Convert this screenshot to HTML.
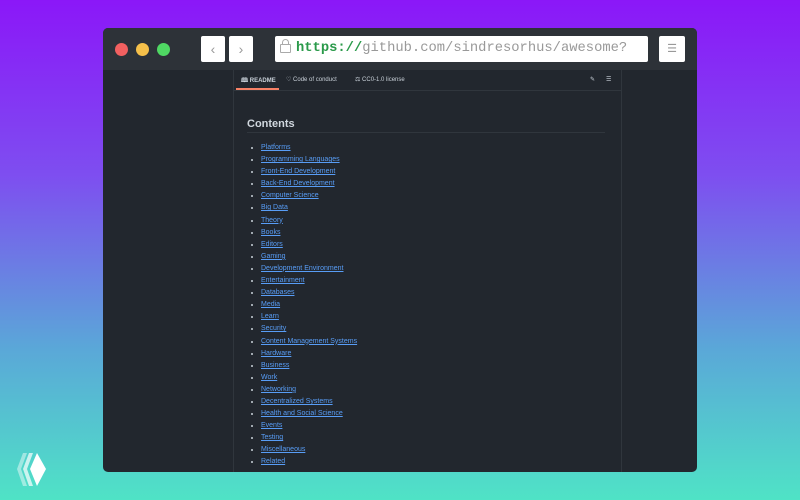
<!DOCTYPE html>
<html><head><style>
body{margin:0;width:800px;height:500px;overflow:hidden;background:linear-gradient(180deg,#8b17f8 0%,#7e4ef0 35%,#5aa8d8 70%,#4fe3c6 100%);font-family:"Liberation Sans",sans-serif;position:relative}
.win{position:absolute;left:103px;top:28px;width:594px;height:444px;background:#22272e;border-radius:5px;overflow:hidden}
.bar{height:42px;background:#2d3238;position:relative}
.dot{position:absolute;top:15px;width:13px;height:13px;border-radius:50%}
.btn{position:absolute;top:8px;height:26px;background:#fff;border-radius:2px;color:#999;font-size:14px;text-align:center;line-height:26px}
.url{position:absolute;left:172px;top:8px;width:373px;height:26px;background:#fff;border-radius:2px;font-family:"Liberation Mono",monospace;font-size:13.8px;line-height:26px;color:#999;white-space:nowrap;overflow:hidden}
.lock{position:absolute;left:5px;top:8px;width:9px;height:7px;border:1.5px solid #aaa;border-radius:1px}
.lock:before{content:"";position:absolute;left:1px;top:-6px;width:5px;height:5px;border:1.5px solid #aaa;border-bottom:none;border-radius:4px 4px 0 0}
.panel{position:absolute;left:130px;top:42px;width:387px;height:402px;border-left:1px solid #30363d;border-right:1px solid #30363d}
.tabs{height:20px;border-bottom:1px solid #30363d;font-size:6px;color:#c9d1d9;position:relative;white-space:nowrap}
.tabs span{position:absolute;top:6px}
h2{position:absolute;left:13px;top:48px;margin:0;font-size:11px;color:#d0d7de;width:358px;border-bottom:1px solid #30363d;padding-bottom:2px}
ul{position:absolute;left:18px;top:72px;margin:0;padding:0 0 0 9px;font-size:7px;line-height:12.1px;color:#c9d1d9}
li a{color:#589df6;text-decoration:underline}
</style></head><body>
<div class="win">
<div class="bar">
<div class="dot" style="left:12px;background:#f26060"></div>
<div class="dot" style="left:33px;background:#f5c04a"></div>
<div class="dot" style="left:54px;background:#4fd863"></div>
<div class="btn" style="left:98px;width:24px">‹</div>
<div class="btn" style="left:126px;width:24px">›</div>
<div class="url"><div class="lock"></div><span style="position:absolute;left:21px"><span style="color:#2a9a4a;font-weight:bold">https://</span>github.com/sindresorhus/awesome?</span></div>
<div class="btn" style="left:556px;width:26px;font-size:11px">☰</div>
</div>
<div class="panel">
<div class="tabs"><span style="left:7px;font-weight:bold">🕮 README</span><span style="left:52px">♡ Code of conduct</span><span style="left:121px">⚖ CC0-1.0 license</span><span style="left:356px">✎</span><span style="left:372px">☰</span>
<div style="position:absolute;left:2px;top:18px;width:43px;height:2px;background:#f78166"></div></div>
<h2>Contents</h2>
<ul>
<li><a>Platforms</a></li><li><a>Programming Languages</a></li><li><a>Front-End Development</a></li><li><a>Back-End Development</a></li><li><a>Computer Science</a></li><li><a>Big Data</a></li><li><a>Theory</a></li><li><a>Books</a></li><li><a>Editors</a></li><li><a>Gaming</a></li><li><a>Development Environment</a></li><li><a>Entertainment</a></li><li><a>Databases</a></li><li><a>Media</a></li><li><a>Learn</a></li><li><a>Security</a></li><li><a>Content Management Systems</a></li><li><a>Hardware</a></li><li><a>Business</a></li><li><a>Work</a></li><li><a>Networking</a></li><li><a>Decentralized Systems</a></li><li><a>Health and Social Science</a></li><li><a>Events</a></li><li><a>Testing</a></li><li><a>Miscellaneous</a></li><li><a>Related</a></li>
</ul>
</div>
</div>
<svg style="position:absolute;left:15px;top:452px" width="34" height="36" viewBox="0 0 34 36">
<path d="M8 1 L2 17 L8 34 L12 34 L6 17 L12 1Z" fill="#fff" opacity=".45"/>
<path d="M14 1 L8 17 L14 34 L18 34 L12 17 L18 1Z" fill="#fff" opacity=".7"/>
<path d="M22 1 L15 17 L22 34 L31 17Z" fill="#fff"/>
</svg>
</body></html>
